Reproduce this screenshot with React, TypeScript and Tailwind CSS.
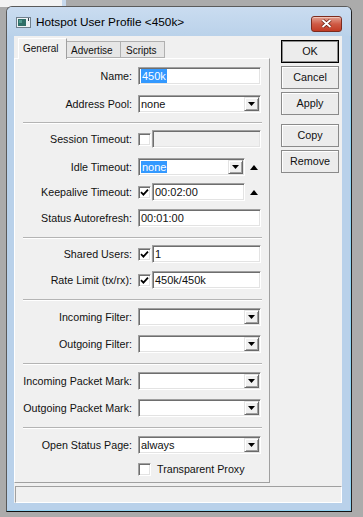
import React from "react";

// classic sunken edit box
const sunken =
  "border border-t-[#a0a0a0] border-l-[#a0a0a0] border-b-white border-r-white shadow-[inset_1px_1px_0_#6e6e6e,inset_-1px_-1px_0_#e3e3e3]";

const Label = ({ children }: { children: React.ReactNode }) => (
  <div className="w-[117px] mr-[6px] text-right text-[10.7px] leading-none text-[#111] whitespace-nowrap">
    {children}
  </div>
);

const Sel = ({ children }: { children: React.ReactNode }) => (
  <span className="bg-[#3399ff] text-white px-px leading-[14px]">{children}</span>
);

const TextBox = ({
  className,
  children,
  disabled,
}: {
  className: string;
  children?: React.ReactNode;
  disabled?: boolean;
}) => (
  <div
    className={`${className} h-[18px] ${sunken} ${
      disabled ? "bg-[#f0f0f0]" : "bg-white"
    } flex items-center pl-[2px] text-[11px] text-[#111] leading-none`}
  >
    {children}
  </div>
);

const ArrowBtn = () => (
  <div className="w-[15px] h-[14px] mr-px flex items-center justify-center bg-[#f0f0f0] border border-t-[#e3e3e3] border-l-[#e3e3e3] border-b-[#696969] border-r-[#696969] shadow-[inset_1px_1px_0_#fff,inset_-1px_-1px_0_#a0a0a0]">
    <svg width="7" height="4" viewBox="0 0 7 4">
      <path d="M0 0 H7 L3.5 4 Z" fill="#000" />
    </svg>
  </div>
);

const Combo = ({ className, children }: { className: string; children?: React.ReactNode }) => (
  <div
    className={`${className} h-[18px] ${sunken} bg-white flex items-center pl-[2px] text-[11px] text-[#111] leading-none`}
  >
    <div className="flex-1">{children}</div>
    <ArrowBtn />
  </div>
);

const Check = ({ checked }: { checked?: boolean }) => (
  <div className={`w-[13px] h-[13px] bg-white ${sunken} flex items-center justify-center`}>
    {checked && (
      <svg width="9" height="9" viewBox="0 0 9 9">
        <path d="M1 4.2 L3.4 6.6 L8 1.6" stroke="#000" strokeWidth="1.8" fill="none" />
      </svg>
    )}
  </div>
);

const UpArrow = () => (
  <svg className="ml-[5px]" width="8" height="5" viewBox="0 0 8 5">
    <path d="M0 5 H8 L4 0 Z" fill="#000" />
  </svg>
);

const Sep = ({ className }: { className: string }) => (
  <div className={`${className} ml-[8px] w-[239px] h-[2px] border-t border-[#b4b4b4] border-b border-b-white`} />
);

const Btn = ({ children, def, className }: { children: React.ReactNode; def?: boolean; className?: string }) => (
  <div
    className={`${className ?? ""} h-[23px] w-[58px] flex items-center justify-center text-[10.8px] text-[#111] bg-[#ececec] border ${
      def ? "border-black shadow-[inset_0_0_0_1px_#8c8c8c]" : "border-[#8a8a8a] shadow-[inset_1px_1px_0_#fff]"
    }`}
  >
    {children}
  </div>
);

export default function App() {
  return (
    <div className="relative w-[363px] h-[517px] bg-[#ababab] overflow-hidden font-['Liberation_Sans',Arial,sans-serif]">
      {/* window behind */}
      <div className="absolute left-0 top-0 w-[62px] h-[7px] bg-[#f3f3f3]" />
      <div className="absolute left-[62px] top-0 w-[4px] h-[7px] bg-[#c6d8ec]" />

      {/* dialog window */}
      <div className="absolute left-[6px] top-[6px] w-[346px] h-[506px] rounded-t-[6px] border border-[#5a5a5a] border-b-[#111] border-r-[#222] bg-[#b9d1ea] flex flex-col shadow-[inset_-1px_-1px_0_#8fd3f3]">
        {/* title bar */}
        <div className="h-[29px] rounded-t-[5px] bg-gradient-to-b from-[#cadcf0] to-[#bad2ea] flex items-center pl-[9px] pr-[9px]">
          <svg width="15" height="11" viewBox="0 0 15 11" className="mt-[2px]">
            <rect x="0.5" y="0.5" width="14" height="10" fill="#eef2f5" stroke="#6f7f8c" />
            <rect x="2" y="2" width="8" height="7" fill="#2f6f68" />
            <rect x="3" y="3" width="3" height="3" fill="#4f9a8f" />
            <rect x="12" y="1" width="1" height="3" fill="#33424f" />
          </svg>
          <div className="ml-[5px] text-[11.8px] text-black leading-none mt-[3px]">Hotspot User Profile &lt;450k&gt;</div>
          <div className="ml-auto mt-[4px] w-[31px] h-[16px] rounded-[3px] border border-[#7c2b1e] bg-gradient-to-b from-[#e0a092] via-[#cf5a45] to-[#c13b24] flex items-center justify-center shadow-[inset_0_1px_0_#f0c4b8]">
            <svg width="11" height="9" viewBox="0 0 11 9">
              <path d="M1.5 1 L9.5 8 M9.5 1 L1.5 8" stroke="#6b2014" strokeWidth="3.4" />
              <path d="M1.5 1 L9.5 8 M9.5 1 L1.5 8" stroke="#fff" strokeWidth="1.8" />
            </svg>
          </div>
        </div>

        {/* client area */}
        <div className="ml-[7px] w-[328px] h-[467px] bg-[#f0f0f0] flex flex-col">
          <div className="flex h-[447px] pt-[2px]">
            {/* tab control */}
            <div className="flex flex-col w-[256px]">
              <div className="h-[20px] flex items-end pl-[4px] text-[10px] text-[#111] leading-none">
                <div className="relative z-10 -mb-px h-[21px] w-[49px] bg-[#f0f0f0] border-t border-l border-t-white border-l-white border-r border-r-[#a0a0a0] pl-[4px] pt-[5px]">
                  General
                </div>
                <div className="h-[17px] w-[54px] bg-[#e6e6e6] border border-[#b0b0b0] border-l-0 pl-[4px] pt-[4px]">
                  Advertise
                </div>
                <div className="h-[17px] w-[44px] bg-[#e6e6e6] border border-[#b0b0b0] border-l-0 pl-[5px] pt-[4px]">
                  Scripts
                </div>
              </div>
              <div className="h-[425px] border-t border-l border-t-white border-l-white border-r border-b border-r-[#a0a0a0] border-b-[#a0a0a0] flex flex-col">
                <div className="flex items-center h-[18px] mt-[8px]">
                  <Label>Name:</Label>
                  <TextBox className="w-[123px]">
                    <Sel>450k</Sel>
                  </TextBox>
                </div>
                <div className="flex items-center h-[18px] mt-[10px]">
                  <Label>Address Pool:</Label>
                  <Combo className="w-[123px]">none</Combo>
                </div>
                <Sep className="mt-[9px]" />
                <div className="flex items-center h-[18px] mt-[6px]">
                  <Label>Session Timeout:</Label>
                  <Check />
                  <TextBox className="ml-px w-[109px]" disabled />
                </div>
                <div className="flex items-center h-[18px] mt-[10px]">
                  <Label>Idle Timeout:</Label>
                  <Combo className="w-[107px]">
                    <Sel>none</Sel>
                  </Combo>
                  <UpArrow />
                </div>
                <div className="flex items-center h-[18px] mt-[7px]">
                  <Label>Keepalive Timeout:</Label>
                  <Check checked />
                  <TextBox className="ml-px w-[93px]">00:02:00</TextBox>
                  <UpArrow />
                </div>
                <div className="flex items-center h-[18px] mt-[8px]">
                  <Label>Status Autorefresh:</Label>
                  <TextBox className="w-[123px]">00:01:00</TextBox>
                </div>
                <Sep className="mt-[10px]" />
                <div className="flex items-center h-[18px] mt-[6px]">
                  <Label>Shared Users:</Label>
                  <Check checked />
                  <TextBox className="ml-px w-[109px]">1</TextBox>
                </div>
                <div className="flex items-center h-[18px] mt-[8px]">
                  <Label>Rate Limit (tx/rx):</Label>
                  <Check checked />
                  <TextBox className="ml-px w-[109px]">450k/450k</TextBox>
                </div>
                <Sep className="mt-[10px]" />
                <div className="flex items-center h-[18px] mt-[7px]">
                  <Label>Incoming Filter:</Label>
                  <Combo className="w-[123px]" />
                </div>
                <div className="flex items-center h-[18px] mt-[9px]">
                  <Label>Outgoing Filter:</Label>
                  <Combo className="w-[123px]" />
                </div>
                <Sep className="mt-[10px]" />
                <div className="flex items-center h-[18px] mt-[7px]">
                  <Label>Incoming Packet Mark:</Label>
                  <Combo className="w-[123px]" />
                </div>
                <div className="flex items-center h-[18px] mt-[9px]">
                  <Label>Outgoing Packet Mark:</Label>
                  <Combo className="w-[123px]" />
                </div>
                <Sep className="mt-[10px]" />
                <div className="flex items-center h-[18px] mt-[7px]">
                  <Label>Open Status Page:</Label>
                  <Combo className="w-[123px]">always</Combo>
                </div>
                <div className="flex items-center h-[13px] mt-[9px] ml-[123px]">
                  <Check />
                  <div className="ml-[6px] text-[10.7px] leading-none text-[#111]">Transparent Proxy</div>
                </div>
              </div>
            </div>

            {/* buttons */}
            <div className="ml-[11px] mt-[2px] flex flex-col">
              <Btn def>OK</Btn>
              <Btn className="mt-[3px]">Cancel</Btn>
              <Btn className="mt-[3px]">Apply</Btn>
              <Btn className="mt-[9px]">Copy</Btn>
              <Btn className="mt-[3px]">Remove</Btn>
            </div>
          </div>

          {/* status bar */}
          <div className="mt-[3px] ml-px w-[327px] h-[17px] border border-t-[#a0a0a0] border-l-[#a0a0a0] border-b-white border-r-white" />
        </div>
      </div>
    </div>
  );
}
